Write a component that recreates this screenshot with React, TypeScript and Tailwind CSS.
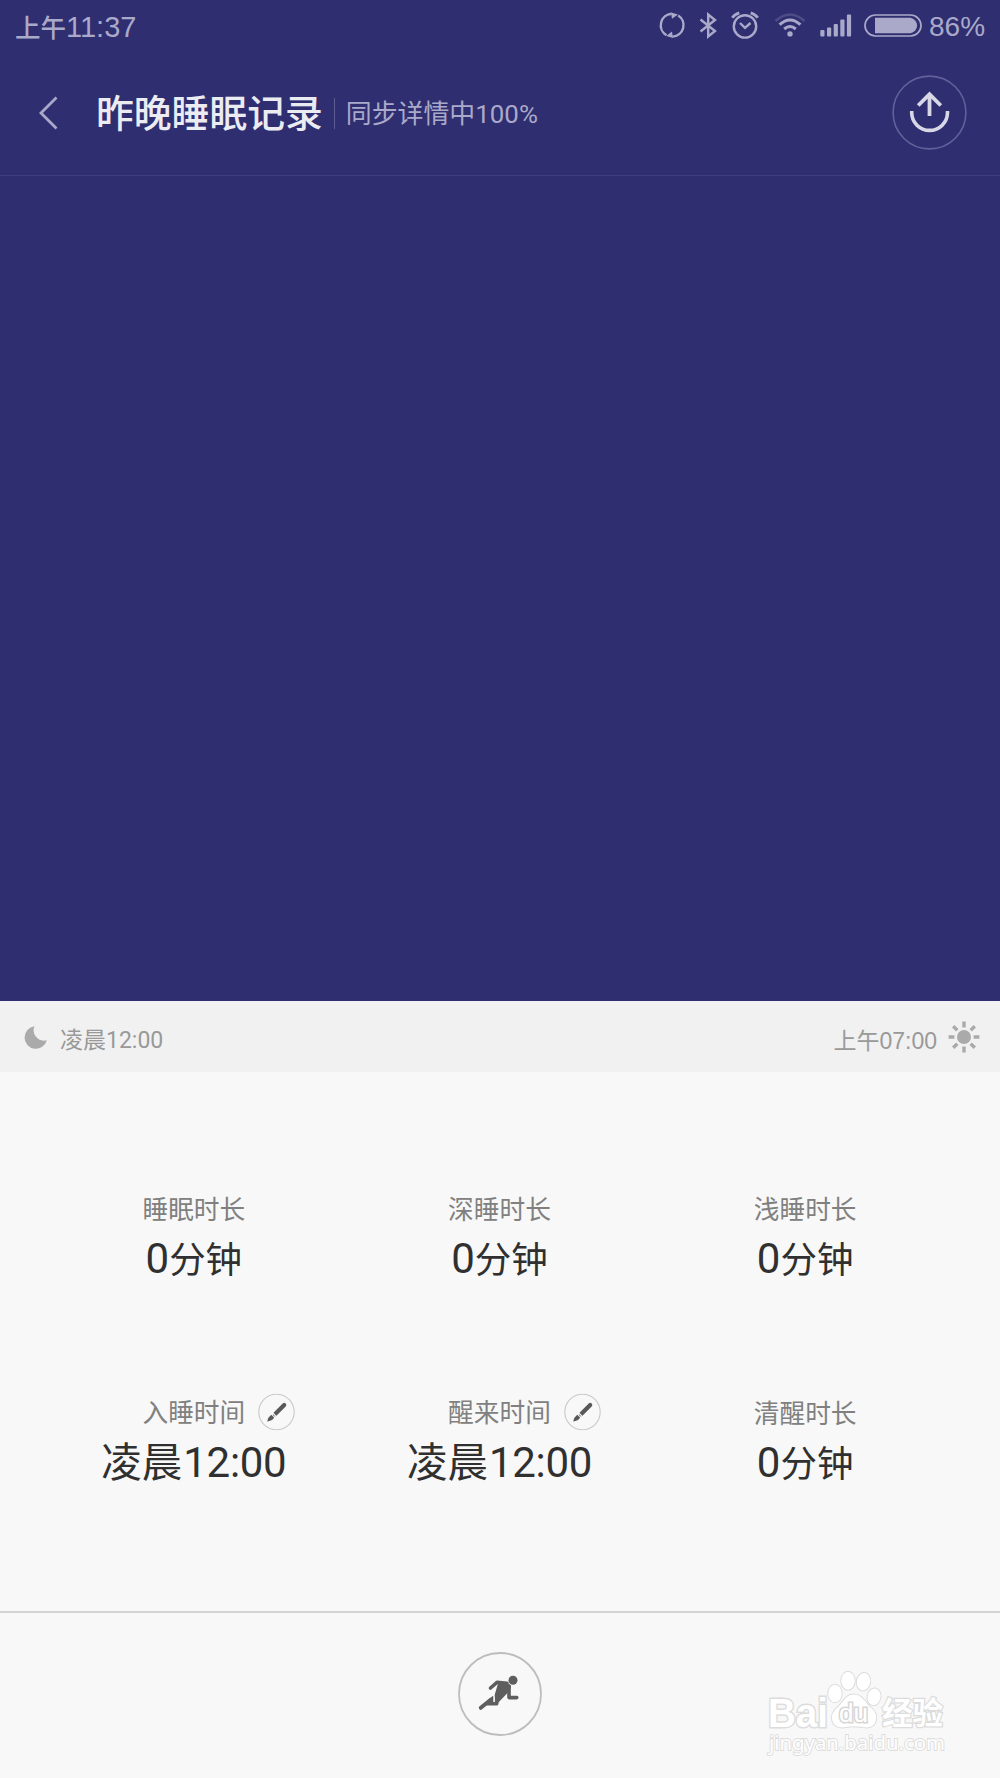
import React from "react";

const FONT = "font-['Roboto','Noto_Sans_CJK_SC',sans-serif]";

type StatProps = {
  label: string;
  value: React.ReactNode;
  editable?: boolean;
};

const StatusIcons = () => (
  <div className="flex h-[50px] items-center text-[#aaa9c9]">
    {/* sync */}
    <svg width="28" height="28" viewBox="0 0 28 28" fill="none" stroke="currentColor" strokeWidth="2.4">
      <path d="M8.5 24.2A11.5 11.5 0 0 1 13.5 2.8" />
      <path d="M20.2 4.4A11.5 11.5 0 0 1 14.5 25.6" />
      <path d="M13 1.4L20 3.4L14 7.8Z M15 27L8.2 25L14 20.6Z" fill="currentColor" stroke="none" />
    </svg>
    {/* bluetooth */}
    <svg className="ml-[13px]" width="19" height="28" viewBox="0 0 19 28" fill="none" stroke="currentColor" strokeWidth="2.4">
      <path d="M1.5 8.5L16 20L9.2 25.5V3.5L16 9L1.5 20.5" />
    </svg>
    {/* alarm */}
    <svg className="ml-[13px]" width="28" height="28" viewBox="0 0 28 28" fill="none" stroke="currentColor" strokeWidth="2.4">
      <circle cx="14" cy="15.4" r="11.2" />
      <path d="M9 12L14 16.8L19.5 12" />
      <path d="M1.3 6.8Q3.5 3.2 8.3 1.8M26.7 6.8Q24.5 3.2 19.7 1.8" strokeWidth="2.8" />
    </svg>
    {/* wifi */}
    <svg className="ml-[15px]" width="32" height="28" viewBox="0 0 32 28" fill="none" stroke="currentColor" strokeWidth="3">
      <path d="M1.5 10Q16 -3 30.5 10" opacity="0.25" strokeWidth="2.6" />
      <path d="M5.6 13.7Q16 4.3 26.4 13.7" />
      <path d="M10.2 18Q16 13 21.8 18" />
      <circle cx="16" cy="22.9" r="2.7" fill="currentColor" stroke="none" />
    </svg>
    {/* signal */}
    <svg className="ml-[14px]" width="33" height="28" viewBox="0 0 33 28" fill="currentColor">
      <rect x="0.3" y="19" width="4.2" height="6.5" rx="1" />
      <rect x="7" y="16.5" width="4.2" height="9" rx="1" />
      <rect x="13.7" y="13" width="4.2" height="12.5" rx="1" />
      <rect x="20.3" y="8.5" width="4.2" height="17" rx="1" />
      <rect x="26.9" y="3.5" width="4.2" height="22" rx="1" />
    </svg>
    {/* battery */}
    <svg className="ml-[11px]" width="58" height="28" viewBox="0 0 58 28">
      <rect x="1" y="4" width="56" height="21" rx="10.5" fill="none" stroke="currentColor" strokeWidth="1.7" />
      <path d="M11 6.8H46.5A7.8 7.8 0 0 1 46.5 22.2H11Z" fill="currentColor" />
    </svg>
    <span className="ml-[7px] w-[56px] pt-[3px] font-['Liberation_Sans',sans-serif] text-[28px] leading-[30px]">
      86%
    </span>
  </div>
);

const EditButton = () => (
  <button className="absolute left-full top-1/2 ml-[13px] -mt-px h-[37px] w-[37px] -translate-y-1/2">
    <svg width="37" height="37" viewBox="0 0 37 37">
      <circle cx="18.5" cy="18.5" r="17.7" fill="none" stroke="#c9c9c9" strokeWidth="1.1" />
      <path d="M17 20.7L26.2 11.4" stroke="#595959" strokeWidth="4.2" strokeLinecap="round" />
      <path d="M14.7 19.5L18.4 23.2" stroke="#f8f8f8" strokeWidth="1.2" />
      <path d="M13.2 21.2L16.2 24.1Q14 27.8 9.2 28Q10 23.5 13.2 21.2Z" fill="#595959" />
    </svg>
  </button>
);

const Stat: React.FC<StatProps> = ({ label, value, editable }) => (
  <div className="flex flex-col items-center">
    <div className={`relative text-[25.7px] leading-9 text-[#808080] ${editable ? "-mt-px mb-px" : ""}`}>
      {label}
      {editable && <EditButton />}
    </div>
    <div className="mt-[7px] whitespace-nowrap text-[42px] leading-[48px] text-[#303030]">
      {value}
    </div>
  </div>
);

const Minutes = () => (
  <>
    0<span className="text-[36.5px] leading-none">分钟</span>
  </>
);

const Midnight = () => (
  <>
    <span className="text-[40.5px] leading-none">凌晨</span>
    <span className="ml-px tracking-[-0.3px]">12:00</span>
  </>
);

const Watermark = () => (
  <svg
    className="absolute left-[760px] top-[1665px]"
    width="195"
    height="95"
    viewBox="0 0 195 95"
    fill="#ffffff"
    stroke="#dcdcdc"
    strokeWidth="2"
    paintOrder="stroke"
  >
    <text x="8" y="61.5" fontSize="41" fontWeight="700" textLength="60" lengthAdjust="spacingAndGlyphs" strokeWidth="3" fontFamily="Liberation Sans, sans-serif">
      Bai
    </text>
    <ellipse cx="75" cy="28.5" rx="6.7" ry="8.8" />
    <ellipse cx="88" cy="15.7" rx="6.7" ry="9" />
    <ellipse cx="103.5" cy="16.7" rx="6.7" ry="8.8" transform="rotate(10 103.5 16.7)" />
    <ellipse cx="114" cy="31.8" rx="6.5" ry="8.4" transform="rotate(10 114 31.8)" />
    <path d="M94 29.5C102 29.5 105 37 110 42C115 46 117 50 116 55C114 63 107 63 102 62C97 61 91 61 86 62C79 63.5 73 61 72 54C71 48 76 44 80 40C85 34 87 29.5 94 29.5Z" />
    <text x="79" y="57" fontSize="25" fontWeight="400" textLength="29" lengthAdjust="spacingAndGlyphs" fill="#ffffff" stroke="#d6d6d6" strokeWidth="3" fontFamily="Liberation Sans, sans-serif">
      du
    </text>
    <text x="122" y="58.5" fontSize="30.5" fontWeight="700" textLength="61" strokeWidth="2.5" fontFamily="Noto Sans CJK SC, sans-serif">
      经验
    </text>
    <text x="9" y="85" fontSize="20" textLength="176" lengthAdjust="spacingAndGlyphs" strokeWidth="1.8" fontFamily="Noto Sans, sans-serif">
      jingyan.baidu.com
    </text>
  </svg>
);

const App: React.FC = () => {
  return (
    <div className={`relative flex h-[1778px] w-[1000px] flex-col overflow-hidden bg-[#f8f8f8] ${FONT}`}>
      <div className="h-[1001px] bg-[#2e2e71]">
        {/* status bar */}
        <div className="flex h-[50px] items-center justify-between px-[15px]">
          <div className="pt-[3px] font-['Liberation_Sans','Noto_Sans_CJK_SC',sans-serif] text-[29px] leading-[30px] text-[#aaa9c9]">
            <span className="text-[25.5px] font-medium leading-none">上午</span>
            <span>11:37</span>
          </div>
          <StatusIcons />
        </div>

        {/* title bar */}
        <header className="flex h-[126px] items-center border-b border-[#3e3d80] pl-[38px] pr-[33px]">
          <svg width="22" height="36" viewBox="0 0 22 36" fill="none" stroke="#aaa9c9" strokeWidth="2.8">
            <path d="M18.5 2.5L3 18L18.5 33.5" />
          </svg>
          <h1 className="ml-[36px] pt-[3px] text-[37.8px] font-medium leading-[50px] text-[#ebebf2]">昨晚睡眠记录</h1>
          <div className="ml-[11px] mt-px h-[31px] w-px bg-[#5d5c93]" />
          <span className="ml-[11px] pt-[3px] text-[25.9px] leading-9 text-[#aaa9c9]">同步详情中100%</span>
          <button className="ml-auto">
            <svg width="75" height="75" viewBox="0 0 75 75" fill="none" stroke="#d8d7e6">
              <circle cx="37.5" cy="37.5" r="36.4" stroke="#62619a" strokeWidth="1.6" />
              <path d="M19.7 36V37.5A17.9 17.9 0 0 0 55.5 37.5V36" strokeWidth="3.6" />
              <path d="M37.5 41V19M26.2 30.5L37.5 19.2L48.8 30.5" strokeWidth="3.8" />
            </svg>
          </button>
        </header>
      </div>

      {/* sleep range */}
      <div className="flex h-[71px] items-center justify-between bg-[#f1f1f1] pl-6 pr-5 text-[23px] leading-9 text-[#999999]">
        <div className="flex items-center">
          <svg width="24" height="24" viewBox="0 0 24 24" fill="#aaaaaa">
            <path d="M10.5 1.2A11.3 11.3 0 1 0 22.8 15.2A10.3 10.3 0 0 1 10.5 1.2Z" />
          </svg>
          <span className="ml-[12px] pt-[9px]">凌晨12:00</span>
        </div>
        <div className="flex items-center">
          <span className="pt-[9px] font-['Liberation_Sans','Noto_Sans_CJK_SC',sans-serif] text-[23px]">上午07:00</span>
          <svg className="ml-[11px]" width="32" height="32" viewBox="0 0 32 32" stroke="#aaaaaa" strokeWidth="3.4">
            <circle cx="16" cy="16" r="7" fill="#aaaaaa" stroke="none" />
            <path d="M16 .6V6.4M16 25.6V31.4M.6 16H6.4M25.6 16H31.4M5.2 5.2L9.3 9.3M22.7 22.7L26.8 26.8M5.2 26.8L9.3 22.7M22.7 9.3L26.8 5.2" />
          </svg>
        </div>
      </div>

      {/* stats */}
      <main className="grid h-[539px] grid-cols-3 content-start gap-y-[113px] pl-[41px] pr-[42px] pt-[120px]">
        <Stat label="睡眠时长" value={<Minutes />} />
        <Stat label="深睡时长" value={<Minutes />} />
        <Stat label="浅睡时长" value={<Minutes />} />
        <Stat label="入睡时间" value={<Midnight />} editable />
        <Stat label="醒来时间" value={<Midnight />} editable />
        <Stat label="清醒时长" value={<Minutes />} />
      </main>

      <footer className="flex flex-1 items-center justify-center border-t-2 border-[#d3d3d3] pb-[3px]">
        <svg width="84" height="84" viewBox="0 0 84 84" fill="none" stroke="#5e5e5e" strokeLinecap="round" strokeLinejoin="round">
          <circle cx="42" cy="42" r="41" stroke="#bdbdbd" strokeWidth="1.8" />
          <circle cx="55" cy="28.3" r="4.5" fill="#5e5e5e" stroke="none" />
          <path d="M32.5 36L39 30.3L49 31.2" strokeWidth="3.6" />
          <path d="M40 31.5Q47 28 53 33.5Q53 38 49 41.5L39 52L36.5 43.5Z" fill="#5e5e5e" stroke="none" />
          <path d="M51 34.5V45.6H58.8" strokeWidth="3.6" />
          <path d="M22.5 56L35 45V51.6L28 52Z" fill="#5e5e5e" strokeWidth="2" />
          <path d="M22.8 55.8L33 47.5" strokeWidth="4" />
          <path d="M29 51.8H38.7V43" strokeWidth="3.6" />
          <path d="M35.8 42.5V49.5" stroke="#f8f8f8" strokeWidth="1" />
        </svg>
      </footer>

      <Watermark />
    </div>
  );
};

export default App;
